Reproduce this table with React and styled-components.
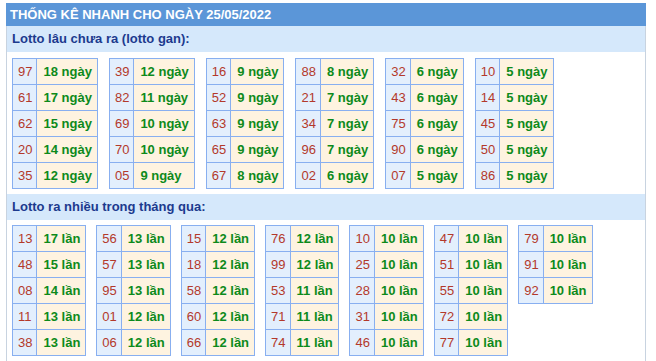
import styled, { createGlobalStyle } from 'styled-components';

const GlobalStyle = createGlobalStyle`
  body {
    margin: 0;
    background: #fff;
    font-family: 'Liberation Sans', Arial, sans-serif;
  }
`;

const gan = [
  [['97', '18'], ['61', '17'], ['62', '15'], ['20', '14'], ['35', '12']],
  [['39', '12'], ['82', '11'], ['69', '10'], ['70', '10'], ['05', '9']],
  [['16', '9'], ['52', '9'], ['63', '9'], ['65', '9'], ['67', '8']],
  [['88', '8'], ['21', '7'], ['34', '7'], ['96', '7'], ['02', '6']],
  [['32', '6'], ['43', '6'], ['75', '6'], ['90', '6'], ['07', '5']],
  [['10', '5'], ['14', '5'], ['45', '5'], ['50', '5'], ['86', '5']],
];

const nhieu = [
  [['13', '17'], ['48', '15'], ['08', '14'], ['11', '13'], ['38', '13']],
  [['56', '13'], ['57', '13'], ['95', '13'], ['01', '12'], ['06', '12']],
  [['15', '12'], ['18', '12'], ['58', '12'], ['60', '12'], ['66', '12']],
  [['76', '12'], ['99', '12'], ['53', '11'], ['71', '11'], ['74', '11']],
  [['10', '10'], ['25', '10'], ['28', '10'], ['31', '10'], ['46', '10']],
  [['47', '10'], ['51', '10'], ['55', '10'], ['72', '10'], ['77', '10']],
  [['79', '10'], ['91', '10'], ['92', '10']],
];

const Wrapper = styled.div`
  width: 640px;
  padding: 3px 0 0 6px;
`;

const Header = styled.div`
  height: 23px;
  line-height: 24px;
  padding-left: 4px;
  background: #5b96d8;
  color: #fff;
  font-size: 13px;
  font-weight: bold;
`;

const Panel = styled.div`
  border-left: 1px solid #c8d3e0;
  border-right: 1px solid #c8d3e0;
  padding-bottom: 10px;
`;

const Title = styled.div`
  height: 26px;
  line-height: 26px;
  padding-left: 5px;
  background: #d5e8fb;
  color: #1c3a8e;
  font-size: 13px;
  font-weight: bold;
`;

const Grid = styled.div`
  display: flex;
  align-items: flex-start;
  gap: ${(p) => p.$gap}px;
  padding: ${(p) => p.$top}px 5px 5px 5px;
`;

const Table = styled.table`
  border-collapse: collapse;
  font-size: 13px;

  td {
    border: 1px solid #88aff0;
    height: 25px;
    line-height: 25px;
    padding: 0;
    white-space: nowrap;
  }
`;

const Num = styled.td`
  && {
    padding: 0 4px 0 5px;
  }
  background: #e3effd;
  color: #b3392b;
`;

const Val = styled.td`
  && {
    padding: 0 5px 0 6px;
  }
  background: #fef3e0;
  color: #0d8a1b;
  font-weight: bold;
`;

const LottoTable = ({ rows, unit }) => (
  <Table>
    <tbody>
      {rows.map(([num, count], i) => (
        <tr key={i}>
          <Num>{num}</Num>
          <Val>
            {count} {unit}
          </Val>
        </tr>
      ))}
    </tbody>
  </Table>
);

const App = () => (
  <Wrapper>
    <GlobalStyle />
    <Header>THỐNG KÊ NHANH CHO NGÀY 25/05/2022</Header>
    <Panel>
      <Title>Lotto lâu chưa ra (lotto gan):</Title>
      <Grid $gap={11} $top={6}>
        {gan.map((rows, i) => (
          <LottoTable key={i} rows={rows} unit='ngày' />
        ))}
      </Grid>
      <Title>Lotto ra nhiều trong tháng qua:</Title>
      <Grid $gap={10} $top={5}>
        {nhieu.map((rows, i) => (
          <LottoTable key={i} rows={rows} unit='lần' />
        ))}
      </Grid>
    </Panel>
  </Wrapper>
);

export default App;
